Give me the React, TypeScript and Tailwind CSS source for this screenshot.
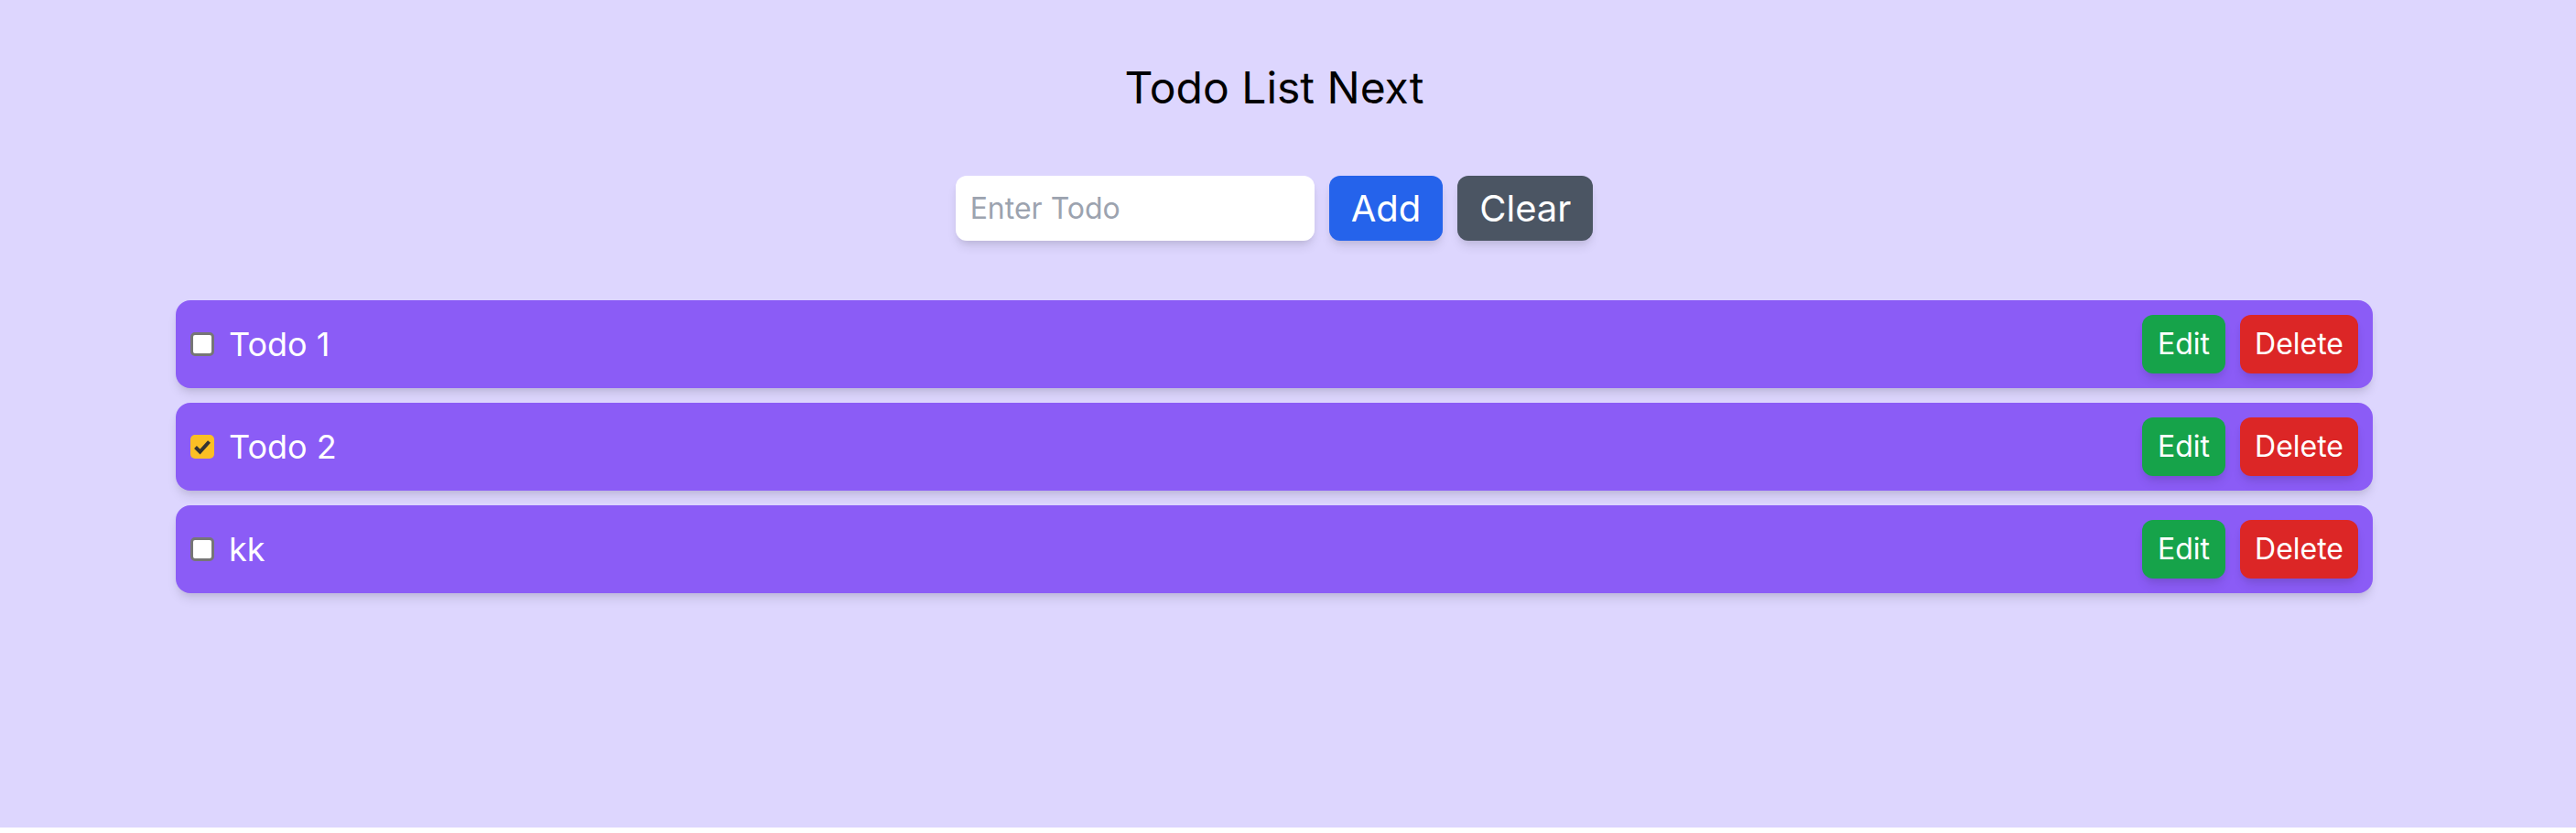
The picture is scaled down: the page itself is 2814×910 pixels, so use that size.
const todos = [
  { id: 1, text: "Todo 1", done: false },
  { id: 2, text: "Todo 2", done: true },
  { id: 3, text: "kk", done: false },
];

const shadow =
  "shadow-[0_8px_12px_-2px_rgba(0,0,0,0.1),0_4px_8px_-4px_rgba(0,0,0,0.1)]";

function Checkbox({ checked }: { checked: boolean }) {
  return (
    <span className="relative flex h-[26px] w-[26px]">
      <input
        type="checkbox"
        defaultChecked={checked}
        className="peer h-[26px] w-[26px] appearance-none rounded-[5px] border-[3px] border-[#767676] bg-white checked:border-0 checked:bg-[#fbbf24]"
      />
      {checked && (
        <svg
          viewBox="0 0 26 26"
          className="pointer-events-none absolute inset-0 h-[26px] w-[26px]"
        >
          <path
            d="M5.5 13.5 L10.5 18.5 L20.5 7.5"
            fill="none"
            stroke="#333333"
            strokeWidth="4"
          />
        </svg>
      )}
    </span>
  );
}

function TodoRow({ text, done }: { text: string; done: boolean }) {
  return (
    <div
      className={`flex items-center justify-between rounded-[16px] bg-[#8b5cf6] p-[16px] ${shadow}`}
    >
      <div className="flex items-center gap-[16px]">
        <Checkbox checked={done} />
        <span className="text-[36px] leading-[56px] text-white">{text}</span>
      </div>
      <div className="flex gap-[16px]">
        <button
          className={`h-[64px] rounded-[12px] bg-[#16a34a] px-[17px] text-[32px] leading-[48px] text-white ${shadow}`}
        >
          Edit
        </button>
        <button
          className={`h-[64px] rounded-[12px] bg-[#dc2626] px-[16px] text-[32px] leading-[48px] text-white ${shadow}`}
        >
          Delete
        </button>
      </div>
    </div>
  );
}

export default function App() {
  return (
    <div className="h-[904px] w-full bg-[#ddd6fe] font-['Inter',sans-serif]">
      <div className="pr-[30px] pt-[64px]">
        <h1 className="text-center text-[48px] leading-[64px] text-black">
          Todo List Next
        </h1>

        {/* Input form */}
        <div className="mt-[64px] flex justify-center gap-[16px]">
          <input
            type="text"
            placeholder="Enter Todo"
            className={`h-[71px] w-[392px] rounded-[12px] bg-white px-[16px] text-[32px] outline-none placeholder:text-[#9ca3af] ${shadow}`}
          />
          <button
            className={`h-[71px] rounded-[12px] bg-[#2563eb] px-[24px] text-[40px] leading-[56px] text-white ${shadow}`}
          >
            Add
          </button>
          <button
            className={`h-[71px] rounded-[12px] bg-[#4b5563] px-[24px] text-[40px] leading-[56px] text-white ${shadow}`}
          >
            Clear
          </button>
        </div>

        {/* Todo list */}
        <div className="mx-auto mt-[65px] flex w-[2400px] flex-col gap-[16px]">
          {todos.map((todo) => (
            <TodoRow key={todo.id} text={todo.text} done={todo.done} />
          ))}
        </div>
      </div>
    </div>
  );
}
